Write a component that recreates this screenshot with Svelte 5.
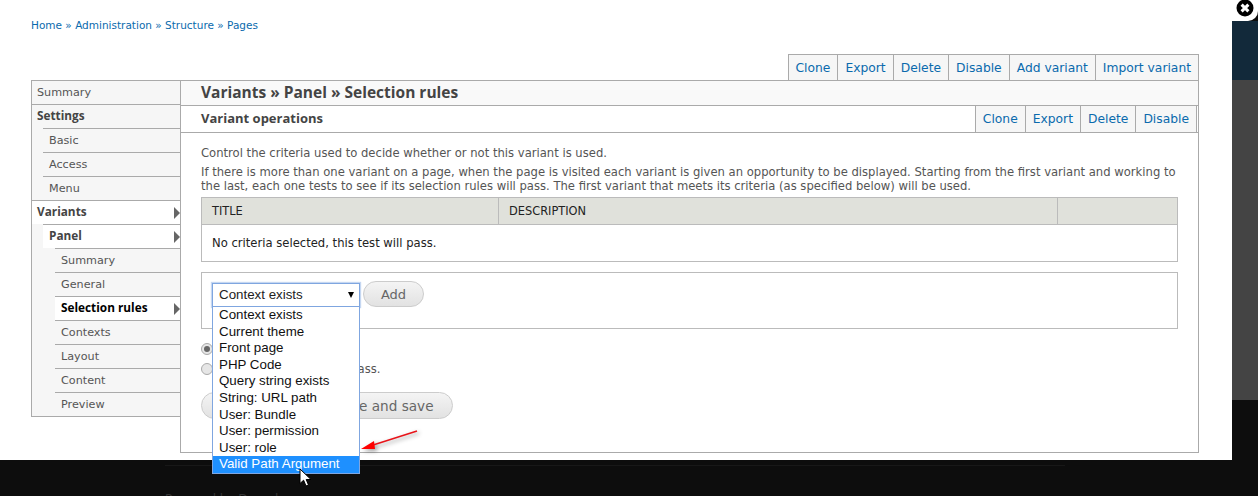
<script>
  const sideItems = [
    { label: 'Summary', level: 0 },
    { label: 'Settings', level: 0, bold: true },
    { label: 'Basic', level: 1 },
    { label: 'Access', level: 1 },
    { label: 'Menu', level: 1 },
    { label: 'Variants', level: 0, bold: true, active: true },
    { label: 'Panel', level: 1, bold: true, active: true },
    { label: 'Summary', level: 2 },
    { label: 'General', level: 2 },
    { label: 'Selection rules', level: 2, bold: true, active: true, current: true },
    { label: 'Contexts', level: 2 },
    { label: 'Layout', level: 2 },
    { label: 'Content', level: 2 },
    { label: 'Preview', level: 2 }
  ];
  const topTabs = ['Clone', 'Export', 'Delete', 'Disable', 'Add variant', 'Import variant'];
  const subTabs = ['Clone', 'Export', 'Delete', 'Disable'];
  const options = [
    'Context exists',
    'Current theme',
    'Front page',
    'PHP Code',
    'Query string exists',
    'String: URL path',
    'User: Bundle',
    'User: permission',
    'User: role',
    'Valid Path Argument'
  ];
</script>

<div class="screen">
  <div class="page">
    <div class="crumbs">
      <a href="#h">Home</a> » <a href="#a">Administration</a> » <a href="#s">Structure</a> » <a href="#p">Pages</a>
    </div>

    <div class="frame">
      <div class="top-tabs">
        {#each topTabs as t}
          <a class="tab" href="#t">{t}</a>
        {/each}
      </div>

      <div class="columns">
        <ul class="sidebar">
          {#each sideItems as item}
            <li class="l{item.level}" class:bold={item.bold} class:active={item.active} class:current={item.current}>
              <span class="row">{item.label}</span>
            </li>
          {/each}
        </ul>

        <div class="main">
          <h2>Variants » Panel » Selection rules</h2>
          <div class="ops">
            <strong>Variant operations</strong>
            <div class="sub-tabs">
              {#each subTabs as t}
                <a class="tab" href="#t">{t}</a>
              {/each}
            </div>
          </div>

          <div class="body">
            <p class="first">Control the criteria used to decide whether or not this variant is used.</p>
            <p>If there is more than one variant on a page, when the page is visited each variant is given an opportunity to be displayed. Starting from the first variant and working to the last, each one tests to see if its selection rules will pass. The first variant that meets its criteria (as specified below) will be used.</p>

            <table>
              <thead>
                <tr><th class="c1">TITLE</th><th class="c2">DESCRIPTION</th><th></th></tr>
              </thead>
              <tbody>
                <tr><td colspan="3">No criteria selected, this test will pass.</td></tr>
              </tbody>
            </table>

            <div class="add-box">
              <div class="select">
                <span>Context exists</span>
                <span class="caret"></span>
                <ul class="dropdown">
                  {#each options as o, i}
                    <li class:sel={i === options.length - 1}>{o}</li>
                  {/each}
                </ul>
              </div>
              <button class="btn add">Add</button>
            </div>

            <label class="radio"><span class="dot on"></span>All criteria must pass.</label>
            <label class="radio"><span class="dot"></span>Only one criteria must pass.</label>

            <div class="actions">
              <button class="btn big first-btn">Update</button>
              <button class="btn big">Update and save</button>
            </div>
          </div>
        </div>
      </div>
    </div>
  </div>

  <div class="edge">
    <div class="close">
      <svg width="18" height="18" viewBox="0 0 18 18">
        <circle cx="9" cy="9" r="8.5" fill="#000" />
        <path d="M5.6 5.6 12.4 12.4M12.4 5.6 5.6 12.4" stroke="#fff" stroke-width="3" />
      </svg>
    </div>
    <div class="navy"></div>
    <div class="grey"></div>
  </div>

  <div class="footer"><div class="foot-line"><span>Powered by Drupal</span></div></div>

  <svg class="arrow" width="70" height="34" viewBox="0 0 70 34">
    <path d="M57 2 10 17" stroke="#e8141a" stroke-width="1.5" />
    <path d="M1 20 14 12 15 20Z" fill="#f00" />
  </svg>

  <svg class="cursor" width="13" height="20" viewBox="0 0 13 20">
    <path d="M1 1V15.500L4.600 12.200 7 18 9.500 17 7.200 11.500H12Z" fill="#fff" stroke="#000" stroke-width="1" />
  </svg>
</div>

<style>
  :global(body) {
    margin: 0;
    background: #0d0d0d;
  }
  .screen {
    position: relative;
    display: grid;
    grid-template-columns: 1232px 26px;
    grid-template-rows: 460px 36px;
    width: 1258px;
    height: 496px;
    overflow: hidden;
    font-family: "DejaVu Sans", sans-serif;
    font-size: 11.6px;
    color: #555;
  }
  .page {
    background: #fff;
    padding: 18px 33px 0 31px;
    box-sizing: border-box;
  }
  a {
    color: #0a6aad;
    text-decoration: none;
  }
  .crumbs {
    font-size: 10.5px;
    line-height: 15px;
    color: #0a6aad;
  }
  .frame {
    margin-top: 21px;
  }
  .top-tabs {
    display: flex;
    justify-content: flex-end;
    height: 26px;
  }
  .tab {
    display: block;
    padding: 0 7px;
    border: 1px solid #aaa;
    margin-left: -1px;
    background: #f6f6f6;
    line-height: 26px;
    font-size: 12.3px;
  }
  .top-tabs .tab {
    border-bottom: none;
  }
  .columns {
    display: flex;
    align-items: flex-start;
  }
  .sidebar {
    list-style: none;
    margin: 0;
    padding: 0;
    width: 148px;
    border: 1px solid #aaa;
    border-right: none;
    background: #f6f6f6;
    flex: none;
    font-size: 11.2px;
  }
  .sidebar li {
    height: 24px;
    box-sizing: border-box;
    border-top: 1px solid #aaa;
  }
  .sidebar li:first-child {
    height: 23px;
    border-top: none;
  }
  .sidebar li.l1 {
    border-top: none;
    padding-left: 11px;
  }
  .sidebar li.l2 {
    border-top: none;
    padding-left: 23px;
  }
  .row {
    display: block;
    height: 23px;
    padding-left: 5px;
    line-height: 23px;
    position: relative;
  }
  .sidebar li.l1 .row,
  .sidebar li.l2 .row {
    height: 24px;
    box-sizing: border-box;
    padding-left: 6px;
    border-top: 1px solid #aaa;
  }
  .sidebar .bold .row {
    font-family: "Open Sans", sans-serif;
    font-size: 11.8px;
    font-weight: bold;
    line-height: 21px;
    color: #444;
  }
  .active .row {
    background: #fff;
  }
  .active .row::after {
    content: "";
    position: absolute;
    right: 0;
    top: 6px;
    border-left: 6px solid #666;
    border-top: 6px solid transparent;
    border-bottom: 6px solid transparent;
  }
  .sidebar .current .row {
    color: #000;
  }
  .main {
    flex: 1;
    height: 373px;
    box-sizing: border-box;
    border: 1px solid #aaa;
  }
  h2 {
    margin: 0;
    height: 24px;
    padding-left: 20px;
    background: #f9f9f9;
    border-bottom: 1px solid #aaa;
    font-family: "Open Sans", sans-serif;
    font-size: 15.5px;
    line-height: 23px;
    color: #444;
  }
  .ops {
    display: flex;
    justify-content: space-between;
    height: 26px;
    padding-left: 20px;
    border-bottom: 1px solid #aaa;
    line-height: 25px;
    font-size: 13px;
    color: #444;
  }
  .ops strong {
    font-family: "Open Sans", sans-serif;
  }
  .sub-tabs {
    display: flex;
    height: 26px;
    margin-right: 1px;
  }
  .sub-tabs .tab {
    border-top: none;
    border-bottom: none;
  }
  .body {
    padding: 13px 20px 0 20px;
    line-height: 14px;
    position: relative;
  }
  p {
    margin: 0 0 4px;
  }
  p.first {
    margin-bottom: 5px;
  }
  table {
    width: 977px;
    border-collapse: collapse;
    table-layout: fixed;
  }
  th {
    height: 26px;
    padding: 0 10px;
    background: #e0e1db;
    border: 1px solid #bbb;
    font-weight: normal;
    font-size: 11.4px;
    text-align: left;
    color: #222;
  }
  .c1 {
    width: 276px;
  }
  .c2 {
    width: 538px;
  }
  td {
    height: 36px;
    padding: 0 10px;
    border: 1px solid #bbb;
    color: #222;
  }
  .add-box {
    display: flex;
    align-items: flex-start;
    gap: 3px;
    width: 977px;
    box-sizing: border-box;
    height: 57px;
    margin-top: 10px;
    padding: 8px 10px;
    border: 1px solid #bbb;
  }
  .select {
    position: relative;
    width: 148px;
    height: 24px;
    margin-top: 2px;
    box-sizing: border-box;
    border: 1px solid #7fa6e0;
    box-shadow: 0 0 1px 1px rgba(127, 166, 224, 0.45);
    padding-left: 6px;
    font-family: "Liberation Sans", sans-serif;
    font-size: 13.33px;
    line-height: 22px;
    color: #222;
    background: #fff;
  }
  .caret {
    position: absolute;
    right: 5px;
    top: 8px;
    border-top: 6px solid #000;
    border-left: 3px solid transparent;
    border-right: 3px solid transparent;
  }
  .dropdown {
    position: absolute;
    left: -1px;
    top: 22px;
    width: 148px;
    box-sizing: border-box;
    margin: 0;
    padding: 0;
    list-style: none;
    background: #fff;
    border: 1px solid #7fa6e0;
    z-index: 2;
    color: #111;
  }
  .dropdown li {
    height: 16.6px;
    line-height: 16.6px;
    padding-left: 6px;
  }
  .dropdown .sel {
    background: #1e90ff;
    color: #fff;
  }
  .btn {
    border: 1px solid #ccc;
    border-radius: 14px;
    background: linear-gradient(#f4f4f4, #e2e2e2);
    color: #666;
    font-family: "DejaVu Sans", sans-serif;
    font-size: 13px;
    padding: 0;
  }
  .add {
    width: 61px;
    height: 26px;
  }
  .radio {
    display: flex;
    align-items: center;
    gap: 4px;
    height: 20px;
  }
  .radio:first-of-type {
    margin-top: 10px;
  }
  .dot {
    position: relative;
    width: 12px;
    height: 12px;
    box-sizing: border-box;
    border: 1px solid #aaa;
    border-radius: 50%;
    background: #e6e6e6;
  }
  .dot.on::after {
    content: "";
    position: absolute;
    left: 2px;
    top: 2px;
    width: 6px;
    height: 6px;
    border-radius: 50%;
    background: #666;
  }
  .actions {
    display: flex;
    gap: 5px;
    margin-top: 13px;
  }
  .big {
    height: 27px;
    padding: 0 18px;
    font-size: 13.6px;
  }
  .first-btn {
    padding: 0 21px;
  }
  .edge {
    display: flex;
    flex-direction: column;
    background: #0d0d0d;
  }
  .close {
    height: 21px;
    background: #fff;
    border-bottom-right-radius: 10px;
  }
  .close svg {
    display: block;
    margin-left: 4px;
    margin-top: -1px;
  }
  .navy {
    height: 59px;
    background: #12293a;
  }
  .grey {
    height: 320px;
    background: #444;
  }
  .footer {
    grid-column: 1 / 3;
    background: #0d0d0d;
  }
  .foot-line {
    margin: 5px 0 0 165px;
    width: 900px;
    border-top: 1px solid #181818;
    padding-top: 26px;
    color: #333;
    font-size: 12px;
  }
  .arrow {
    position: absolute;
    left: 360px;
    top: 429px;
    z-index: 3;
    filter: drop-shadow(2px 2px 2px rgba(0, 0, 0, 0.4));
  }
  .cursor {
    position: absolute;
    left: 299px;
    top: 468px;
    z-index: 3;
  }
</style>
